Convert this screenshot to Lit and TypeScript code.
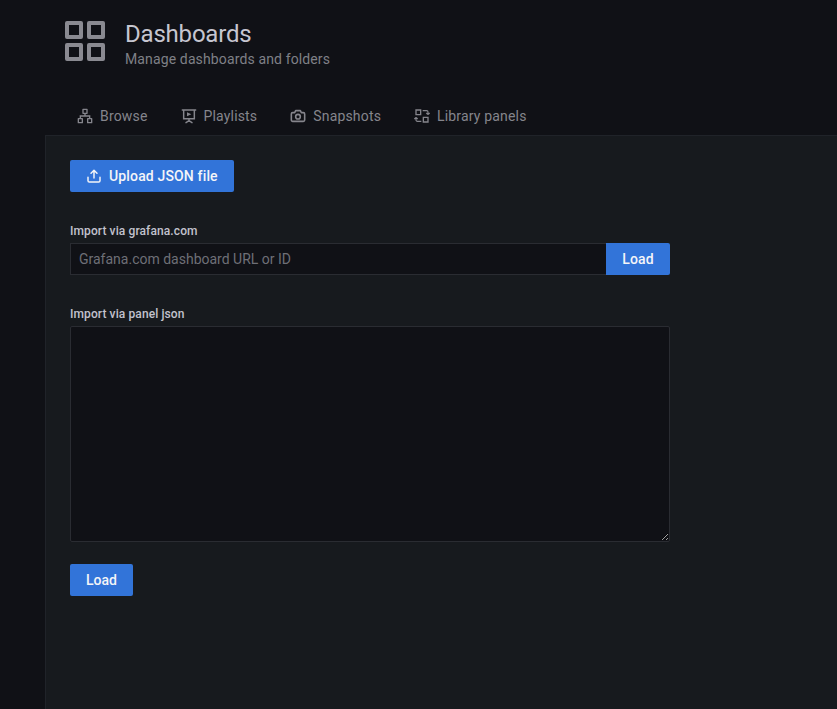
import { LitElement, html, css, svg } from "lit";
import { customElement } from "lit/decorators.js";

const icons = {
  sitemap: svg`<path d="M9 2h6v6H9zM2 16h6v6H2zM16 16h6v6h-6z" fill="none" stroke="currentColor" stroke-width="2" stroke-linejoin="round"/><path d="M12 8v4M5 16v-4h14v4" fill="none" stroke="currentColor" stroke-width="2"/>`,
  play: svg`<path d="M2 3h20M4 3v13h16V3M12 16v3M7.5 22l4.5-3 4.5 3" fill="none" stroke="currentColor" stroke-width="2.2" stroke-linecap="round"/><path d="M9 6.5l6.5 3-6.5 3z" fill="currentColor"/>`,
  camera: svg`<path d="M4 7h3l1.5-3h7L17 7h3a2 2 0 0 1 2 2v9a2 2 0 0 1-2 2H4a2 2 0 0 1-2-2V9a2 2 0 0 1 2-2z" fill="none" stroke="currentColor" stroke-width="2.4" stroke-linejoin="round"/><circle cx="12" cy="13" r="3.5" fill="none" stroke="currentColor" stroke-width="2.4"/>`,
  library: svg`<path d="M3 3h7v7H3zM14 14h7v7h-7z" fill="none" stroke="currentColor" stroke-width="2"/><path d="M13 4h6a2 2 0 0 1 2 2v4M21 10l-2.5-2.5M21 10l2.5-2.5M11 20H5a2 2 0 0 1-2-2v-4M3 14L.5 16.5M3 14l2.5 2.5" fill="none" stroke="currentColor" stroke-width="1.8"/>`,
  upload: svg`<path d="M12 15V4M7.5 8L12 3.5 16.5 8" fill="none" stroke="currentColor" stroke-width="2.2" stroke-linecap="round" stroke-linejoin="round"/><path d="M3 14v5a2 2 0 0 0 2 2h14a2 2 0 0 0 2-2v-5" fill="none" stroke="currentColor" stroke-width="2.2" stroke-linecap="round"/>`,
};

@customElement("app-root")
export class AppRoot extends LitElement {
  static styles = css`
    :host {
      display: block;
      width: 837px;
      height: 709px;
      overflow: hidden;
      background: #101116;
      font-family: Roboto, "Liberation Sans", sans-serif;
      color: #ccccdc;
      box-sizing: border-box;
    }
    .page { display: flex; flex-direction: column; height: 100%; }
    .head { display: flex; gap: 20px; padding: 20px 0 0 65px; height: 96px; box-sizing: border-box; }
    .logo {
      display: grid;
      grid-template-columns: 18px 18px;
      grid-template-rows: 18px 18px;
      gap: 4px;
      width: 40px;
      height: 40px;
      margin-top: 1px;
    }
    .logo span { border: 4px solid #8a8a91; border-radius: 2px; box-sizing: border-box; }
    .title { font-size: 24px; line-height: 28px; font-weight: 400; color: #c6c6d0; margin: 0; letter-spacing: -0.2px; }
    .sub { font-size: 14px; line-height: 18px; color: #7f8086; letter-spacing: 0.13px; margin-top: 2px; }
    .tabs { display: flex; padding-left: 77px; gap: 33px; height: 39px; align-items: center; box-sizing: border-box; }
    .tab { display: flex; align-items: center; gap: 7px; font-size: 14px; color: #85858c; letter-spacing: 0.17px; }
    .tab svg { width: 16px; height: 16px; }
    .panel {
      flex: 1;
      margin-left: 45px;
      background: #171a1e;
      border: 1px solid #202329;
      border-right: 0;
      border-bottom: 0;
      padding: 24px;
      display: flex;
      flex-direction: column;
      align-items: flex-start;
    }
    button {
      font: inherit;
      font-weight: 500;
      font-size: 14px;
      height: 32px;
      border: 0;
      border-radius: 2px;
      background: #3274d9;
      color: #f4f5f8;
      padding: 0 16px;
      display: inline-flex;
      align-items: center;
      gap: 7px;
      letter-spacing: 0.15px;
    }
    button svg { width: 16px; height: 16px; }
    .label { font-size: 12px; line-height: 15px; font-weight: 500; color: #c2c2cd; letter-spacing: 0.1px; margin-bottom: 4px; margin-top: 1px; }
    .g1 { margin-top: 31px; }
    .row { display: flex; width: 600px; }
    input {
      flex: 1;
      min-width: 0;
      height: 32px;
      box-sizing: border-box;
      background: #101116;
      border: 1px solid #2a2c32;
      border-right: 0;
      padding: 0 8px;
      font: inherit;
      font-size: 14px;
      letter-spacing: 0;
      color: #ccccdc;
      outline: none;
    }
    input::placeholder { color: #6e6f76; opacity: 1; }
    .row button { border-radius: 0 2px 2px 0; width: 64px; flex: none; justify-content: center; padding: 0; }
    .g2 { margin-top: 31px; }
    textarea {
      display: block;
      width: 600px;
      height: 216px;
      box-sizing: border-box;
      background: #101116;
      border: 1px solid #2a2c32;
      border-radius: 2px;
      outline: none;
      resize: vertical;
      color-scheme: dark;
      margin: 0;
    }
    .last { margin-top: 22px; letter-spacing: 0; }
  `;

  render() {
    const tabs: [string, any][] = [
      ["Browse", icons.sitemap],
      ["Playlists", icons.play],
      ["Snapshots", icons.camera],
      ["Library panels", icons.library],
    ];
    return html`<div class="page">
      <div class="head">
        <div class="logo"><span></span><span></span><span></span><span></span></div>
        <div>
          <h1 class="title">Dashboards</h1>
          <div class="sub">Manage dashboards and folders</div>
        </div>
      </div>
      <div class="tabs">
        ${tabs.map(
          ([t, i]) => html`<div class="tab"><svg viewBox="0 0 24 24">${i}</svg>${t}</div>`
        )}
      </div>
      <div class="panel">
        <button><svg viewBox="0 0 24 24">${icons.upload}</svg>Upload JSON file</button>
        <div class="g1">
          <div class="label">Import via grafana.com</div>
          <div class="row">
            <input placeholder="Grafana.com dashboard URL or ID" />
            <button>Load</button>
          </div>
        </div>
        <div class="g2">
          <div class="label">Import via panel json</div>
          <textarea></textarea>
        </div>
        <button class="last">Load</button>
      </div>
    </div>`;
  }
}
